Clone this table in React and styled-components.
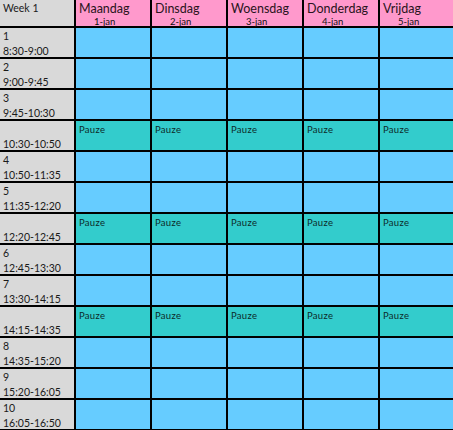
import styled, { createGlobalStyle } from "styled-components";

const GlobalStyle = createGlobalStyle`
  html, body {
    margin: 0;
    padding: 0;
    background: #ffffff;
    overflow: hidden;
  }
  body {
    font-family: Lato, "Liberation Sans", sans-serif;
  }
`;

const days = [
  { name: "Maandag", date: "1-jan" },
  { name: "Dinsdag", date: "2-jan" },
  { name: "Woensdag", date: "3-jan" },
  { name: "Donderdag", date: "4-jan" },
  { name: "Vrijdag", date: "5-jan" },
];

const slots = [
  { nr: "1", time: "8:30-9:00" },
  { nr: "2", time: "9:00-9:45" },
  { nr: "3", time: "9:45-10:30" },
  { pause: true, time: "10:30-10:50" },
  { nr: "4", time: "10:50-11:35" },
  { nr: "5", time: "11:35-12:20" },
  { pause: true, time: "12:20-12:45" },
  { nr: "6", time: "12:45-13:30" },
  { nr: "7", time: "13:30-14:15" },
  { pause: true, time: "14:15-14:35" },
  { nr: "8", time: "14:35-15:20" },
  { nr: "9", time: "15:20-16:05" },
  { nr: "10", time: "16:05-16:50" },
];

export default function App() {
  return (
    <>
      <GlobalStyle />
      <Sheet>
        <WeekCell>Week 1</WeekCell>
        {days.map((d) => (
          <DayCell key={d.name}>
            <DayName>{d.name}</DayName>
            <DayDate>{d.date}</DayDate>
          </DayCell>
        ))}

        {slots.map((s, i) => (
          <Row key={i} slot={s} />
        ))}
      </Sheet>
    </>
  );
}

function Row({ slot }) {
  return (
    <>
      <TimeCell>
        <SlotNr>{slot.nr || ""}</SlotNr>
        <SlotTime>{slot.time}</SlotTime>
      </TimeCell>
      {days.map((d) => (
        <LessonCell key={d.name} $pause={slot.pause}>
          {slot.pause && <PauseLabel>Pauze</PauseLabel>}
        </LessonCell>
      ))}
    </>
  );
}

const Sheet = styled.div`
  display: grid;
  grid-template-columns: repeat(5, 74px) 73px;
  grid-template-rows: 26px repeat(13, 29px);
  gap: 2px;
  padding-bottom: 2px;
  width: 453px;
  height: 430px;
  box-sizing: border-box;
  background: #000000;
  overflow: hidden;
`;

const WeekCell = styled.div`
  background: #d9d9d9;
  color: #1a1a1a;
  font-size: 10.5px;
  padding: 2px 0 0 3px;
  line-height: 13px;
`;

const DayCell = styled.div`
  background: #ff99cc;
  color: #2a1420;
  display: flex;
  flex-direction: column;
  padding: 1px 0 0 3px;
`;

const DayName = styled.span`
  font-size: 12.5px;
  line-height: 15px;
`;

const DayDate = styled.span`
  font-size: 9.5px;
  line-height: 10px;
  margin-top: 1px;
  padding-left: 15px;
  color: #111;
`;

const TimeCell = styled.div`
  background: #d9d9d9;
  color: #1a1a1a;
  display: flex;
  flex-direction: column;
  justify-content: space-between;
  padding: 2px 0 0 3px;
  font-size: 10.5px;
  line-height: 12px;
`;

const SlotNr = styled.span`
  min-height: 12px;
`;

const SlotTime = styled.span``;

const LessonCell = styled.div`
  background: ${(p) => (p.$pause ? "#33cccc" : "#66ccff")};
  padding: 3px 0 0 3px;
`;

const PauseLabel = styled.span`
  display: block;
  font-size: 9.5px;
  line-height: 11px;
  color: #0d2a2a;
  letter-spacing: 0.3px;
`;
